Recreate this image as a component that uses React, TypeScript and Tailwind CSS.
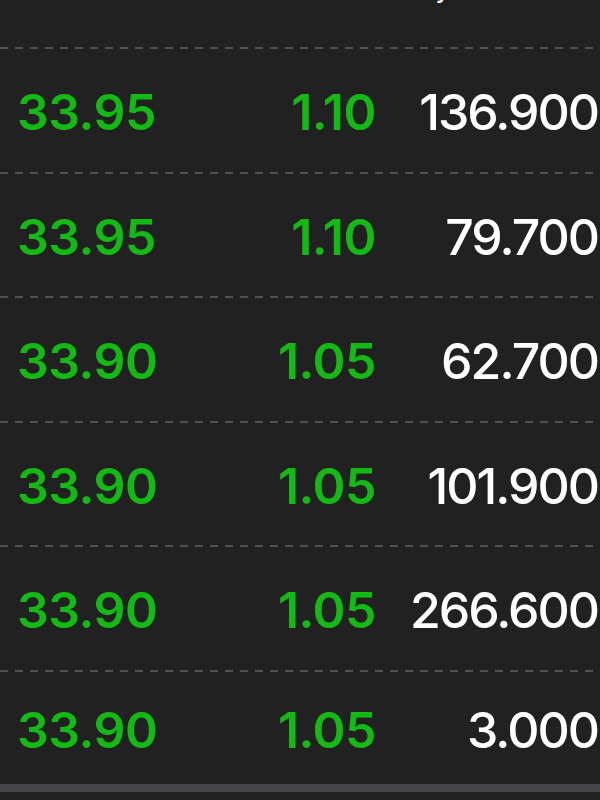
const rows = [
  { price: "33.95", change: "1.10", volume: "136.900" },
  { price: "33.95", change: "1.10", volume: "79.700" },
  { price: "33.90", change: "1.05", volume: "62.700" },
  { price: "33.90", change: "1.05", volume: "101.900" },
  { price: "33.90", change: "1.05", volume: "266.600" },
  { price: "33.90", change: "1.05", volume: "3.000" },
];

function Dashes() {
  return (
    <div className="h-[2px] w-full bg-[repeating-linear-gradient(to_right,#505050_0_8px,transparent_8px_15px)]" />
  );
}

export default function App() {
  return (
    <div
      className="h-[800px] w-[600px] overflow-hidden bg-[#212121] text-white"
      style={{ fontFamily: 'Inter, "Liberation Sans", sans-serif' }}
    >
      {/* header row, mostly scrolled out of view */}
      <div className="h-[47px] overflow-hidden">
        <div className="-mt-[31px] flex h-[36px] justify-end pr-[149px] text-[28px] leading-[36px] text-white">
          <span>Qty</span>
        </div>
      </div>

      {rows.map((r, i) => (
        <div key={i}>
          <Dashes />
          <div
            className={`flex items-center pt-[4px] text-[50px] leading-none ${
              i === rows.length - 1 ? "h-[112px]" : "h-[122.5px]"
            }`}
          >
            <span className="w-[200px] pl-[17px] font-semibold tracking-[-0.5px] text-[#14ba14]">
              {r.price}
            </span>
            <span className="w-[176px] text-right font-semibold tracking-[-0.5px] text-[#14ba14]">
              {r.change}
            </span>
            <span className="flex-1 pr-[2px] text-right font-medium tracking-[-2px]">{r.volume}</span>
          </div>
        </div>
      ))}

      <div className="h-[8px] bg-[#47474b]" />
    </div>
  );
}
